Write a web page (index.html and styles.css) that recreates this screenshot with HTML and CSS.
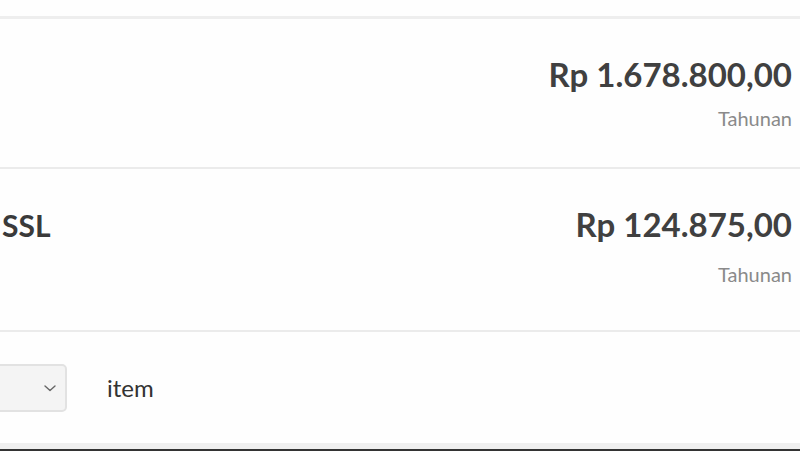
FILE: index.html
```html
<!DOCTYPE html>
<html lang="id">
<head>
<meta charset="utf-8">
<title>Ringkasan</title>
<link rel="stylesheet" href="styles.css">
</head>
<body>
<div class="page">
  <div class="top-gap"></div>
  <div class="row row-first">
    <div class="cell-left"></div>
    <div class="cell-right">
      <div class="price">Rp 1.678.800,00</div>
      <div class="period">Tahunan</div>
    </div>
  </div>
  <div class="row row-second">
    <div class="cell-left">
      <div class="product">SSL</div>
    </div>
    <div class="cell-right">
      <div class="price">Rp 124.875,00</div>
      <div class="period period-low">Tahunan</div>
    </div>
  </div>
  <div class="row row-qty">
    <div class="qty">
      <div class="select">
        <svg class="chev" width="12" height="7" viewBox="0 0 12 7"><path d="M1 1 L6 5.5 L11 1" fill="none" stroke="#666" stroke-width="1.4" stroke-linecap="round" stroke-linejoin="round"/></svg>
      </div>
      <span class="unit">item</span>
    </div>
  </div>
  <div class="footer-band"></div>
  <div class="footer-dark"></div>
</div>
</body>
</html>
```
FILE: styles.css
```css
html, body {
  margin: 0;
  padding: 0;
  background: #fefefe;
}
body {
  font-family: Lato, "Open Sans", "Liberation Sans", sans-serif;
  color: #3f3f3f;
  overflow: hidden;
  width: 800px;
  height: 451px;
}
.page {
  display: flex;
  flex-direction: column;
}
.top-gap {
  height: 16px;
  border-bottom: 3px solid #eeeeee;
}
.row {
  display: flex;
  justify-content: space-between;
  border-bottom: 2px solid #ebebeb;
}
.row-first {
  height: 148px;
}
.row-second {
  height: 161px;
}
.cell-right {
  display: flex;
  flex-direction: column;
  align-items: flex-end;
  padding-right: 8px;
  padding-top: 36px;
}
.cell-left {
  padding-left: 2px;
  padding-top: 37px;
}
.price {
  font-size: 33px;
  font-weight: 700;
  line-height: 38px;
  color: #404040;
}
.product {
  font-size: 30px;
  font-weight: 700;
  line-height: 38px;
  color: #3a3a3a;
}
.period {
  font-size: 20px;
  line-height: 24px;
  color: #8a8a8a;
  margin-top: 13px;
}
.period-low {
  margin-top: 19px;
}
.row-qty {
  height: 111px;
  border-bottom: 0;
}
.qty {
  display: flex;
  align-items: center;
  gap: 40px;
  margin-top: 32px;
  height: 48px;
}
.select {
  width: 69px;
  height: 44px;
  margin-left: -15px;
  background: #f4f4f4;
  border: 2px solid #e2e2e2;
  border-radius: 5px;
  display: flex;
  align-items: center;
  justify-content: flex-end;
  padding-right: 9px;
  box-sizing: content-box;
}
.chev {
  display: block;
}
.unit {
  font-size: 24px;
  color: #333333;
  line-height: 28px;
}
.footer-band {
  height: 6px;
  background: #efefef;
}
.footer-dark {
  height: 3px;
  background: #333333;
}
```
